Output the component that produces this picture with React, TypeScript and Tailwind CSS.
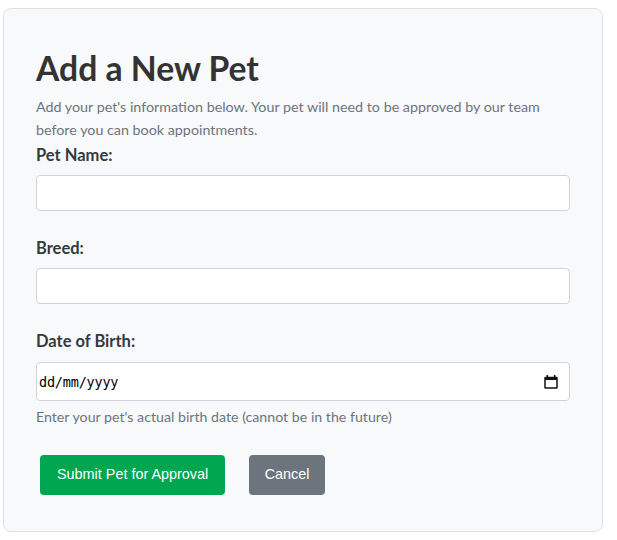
import React from "react";

function CalendarIcon() {
  return (
    <svg width="14" height="15" viewBox="0 0 14 15" className="block">
      <rect x="1" y="3.5" width="12" height="10.5" fill="none" stroke="#111" strokeWidth="1.5" rx="0.5" />
      <rect x="1" y="3" width="12" height="3" fill="#111" />
      <rect x="2.5" y="1" width="1.6" height="2.5" fill="#111" />
      <rect x="9.9" y="1" width="1.6" height="2.5" fill="#111" />
    </svg>
  );
}

export default function App() {
  const btnFont = { fontFamily: "'Liberation Sans', Arial, sans-serif" };
  return (
    <div className="w-[617px] h-[540px] bg-white pt-[8px] pl-[3px]" style={{ fontFamily: "Lato, 'Noto Sans', sans-serif" }}>
      <div className="w-[600px] h-[524px] bg-[#f8f9fa] border border-[#dee2e6] rounded-[8px] px-[32px] pt-[40px]">
        <h1 className="text-[33.7px] leading-[38px] font-bold text-[#333333]">Add a New Pet</h1>
        <p className="mt-[8px] text-[14.3px] leading-[23px] text-[#6c757d]">
          Add your pet's information below. Your pet will need to be approved by our team before you can book appointments.
        </p>
        <div className="mt-[4px]">
          <label className="block text-[16.5px] leading-[20px] font-bold text-[#343a40]">Pet Name:</label>
          <input type="text" className="mt-[10px] block w-[534px] h-[36px] bg-white border border-[#ced4da] rounded-[4px] px-[8px] text-[14px]" />
        </div>
        <div className="mt-[27px]">
          <label className="block text-[16.5px] leading-[20px] font-bold text-[#343a40]">Breed:</label>
          <input type="text" className="mt-[10px] block w-[534px] h-[36px] bg-white border border-[#ced4da] rounded-[4px] px-[8px] text-[14px]" />
        </div>
        <div className="mt-[27px]">
          <label className="block text-[16.5px] leading-[20px] font-bold text-[#343a40]">Date of Birth:</label>
          <div className="mt-[11px] flex items-center justify-between w-[534px] h-[39px] bg-white border border-[#ced4da] rounded-[4px] pl-[2px] pr-[11px]">
            <span className="text-[13.5px] leading-[16px] text-black tracking-[-0.2px]" style={{ fontFamily: "'DejaVu Sans Mono', monospace" }}>
              dd/mm/yyyy
            </span>
            <CalendarIcon />
          </div>
          <p className="mt-[6px] text-[14.2px] leading-[20px] text-[#6c757d]">Enter your pet's actual birth date (cannot be in the future)</p>
        </div>
        <div className="mt-[28px] flex gap-[24px] pl-[4px]">
          <button className="h-[40px] px-[17px] rounded-[4px] bg-[#00a650] text-white text-[14.4px]" style={btnFont}>
            Submit Pet for Approval
          </button>
          <button className="h-[40px] px-[15.5px] rounded-[4px] bg-[#6c757d] text-white text-[14.4px]" style={btnFont}>
            Cancel
          </button>
        </div>
      </div>
    </div>
  );
}
